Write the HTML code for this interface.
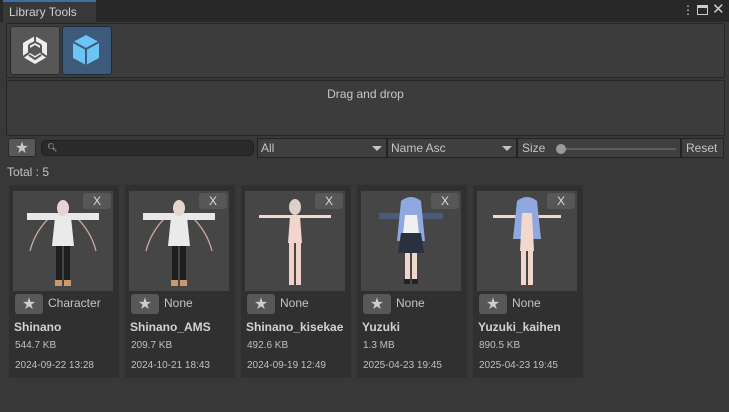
<!DOCTYPE html><html><head><style>
*{margin:0;padding:0;box-sizing:border-box}
body{width:729px;height:412px;background:#383838;font-family:"Liberation Sans","Noto Sans CJK JP",sans-serif;color:#c4c4c4;position:relative;overflow:hidden;font-size:12px}
.a{position:absolute}
.btn{background:#585858;border:1px solid #2a2a2a;border-radius:3px}
.star{color:#c8c8c8;font-size:13px;text-align:center;line-height:18px}
.card{position:absolute;top:185px;width:110px;height:193px;background:#303030;border-radius:2px}
.img{position:absolute;left:4px;top:6px;width:100px;height:100px;background:#464646}
.x{position:absolute;left:74px;top:8px;width:28px;height:16px;background:#575757;border-radius:3px;color:#ddd;text-align:center;line-height:16px;font-size:12px}
.sb{position:absolute;left:6px;top:109px;width:28px;height:20px;background:#585858;border-radius:3px;color:#cfcfcf;text-align:center;line-height:20px;font-size:13px}
.lb{position:absolute;left:39px;top:111px;font-size:12px;color:#c4c4c4}
.nm{position:absolute;left:5px;top:135px;font-size:12px;font-weight:bold;color:#d2d2d2}
.sz{position:absolute;left:6px;top:155px;font-size:10px;color:#c0c0c0}
.dt{position:absolute;left:6px;top:175px;font-size:10px;color:#c0c0c0}
.dd{position:absolute;top:138px;height:20px;background:#3f3f3f;border:1px solid #242424;line-height:19px;padding-left:3px;font-size:12px;color:#c4c4c4}
.tri{position:absolute;right:4px;top:7px;width:0;height:0;border-left:5px solid transparent;border-right:5px solid transparent;border-top:5px solid #c4c4c4}
</style></head><body>
<div class="a" style="left:0;top:0;width:729px;height:22px;background:#282828"></div>
<div class="a" style="left:3px;top:0;width:93px;height:22px;background:#383838;border-top:2px solid #3a6ea5;line-height:20px;padding-left:6px;font-size:12px;color:#d0d0d0">Library Tools</div>
<div class="a" style="left:682px;top:4px;color:#ccc;font-size:12px;line-height:12px">⋮</div>
<div class="a" style="left:697px;top:5px;width:11px;height:10px;border:1px solid #ccc;border-top-width:3px"></div>
<div class="a" style="left:712px;top:1px;color:#ccc;font-size:15px;line-height:18px">✕</div>

<div class="a" style="left:6px;top:23px;width:719px;height:55px;background:#3c3c3c;border:1px solid #262626;border-radius:2px"></div>
<div class="a btn" style="left:10px;top:26px;width:50px;height:49px;background:#575757"></div>
<svg class="a" style="left:21px;top:35px" width="28" height="30" viewBox="0 0 28 30"><path d="M14 1 L26 8 V22 L14 29 L2 22 V8 Z" fill="#eee"/><path d="M14 10 L19 13 V18 L14 21 L9 18 V13 Z" fill="#575757"/><path d="M14 1 V8 M8 10 L14 7 L20 10 M2 22 L8 18 M26 22 L20 18 M8 10 V18 M20 10 V18 M8 20 L14 24 L20 20" stroke="#575757" stroke-width="2" fill="none"/></svg>
<div class="a" style="left:62px;top:26px;width:50px;height:49px;background:#3e5a7a;border:1px solid #1f2c3b;border-radius:3px"></div>
<svg class="a" style="left:71px;top:34px" width="30" height="32" viewBox="0 0 30 32"><path d="M15 1 L28 8 V24 L15 31 L2 24 V8 Z" fill="#6cc4f4"/><path d="M2 8 L15 15 L28 8 M15 15 V31" stroke="#3e5a7a" stroke-width="2" fill="none"/></svg>

<div class="a" style="left:6px;top:80px;width:719px;height:56px;background:#3c3c3c;border:1px solid #262626;border-radius:2px;text-align:center;line-height:26px;color:#c8c8c8">Drag and drop</div>

<div class="a btn star" style="left:8px;top:138px;width:28px;height:19px">★</div>
<div class="a" style="left:41px;top:140px;width:213px;height:16px;background:#2a2a2a;border:1px solid #202020;border-radius:5px;color:#ccc;font-size:8px;line-height:14px;padding-left:5px">🔍︎</div>
<div class="dd" style="left:257px;width:130px">All<div class="tri"></div></div>
<div class="dd" style="left:387px;width:130px">Name Asc<div class="tri"></div></div>
<div class="dd" style="left:517px;width:164px;padding-left:4px">Size
<div class="a" style="left:43px;top:9px;width:115px;height:2px;background:#5f5f5f"></div>
<div class="a" style="left:38px;top:5px;width:10px;height:10px;border-radius:50%;background:#999"></div></div>
<div class="dd" style="left:681px;width:43px;padding-left:4px">Reset</div>

<div class="a" style="left:7px;top:165px;color:#c4c4c4;font-size:12px">Total : 5</div>

<div class="card" style="left:9px"><div class="img"><svg width="100" height="100"><g stroke="#c9a8a0" stroke-width="1.3" fill="none"><path d="M38 25 Q22 40 17 60"/><path d="M62 25 Q78 40 83 60"/></g><rect x="14" y="22" width="72" height="7" fill="#e8e8e8"/><ellipse cx="50" cy="17" rx="6" ry="8" fill="#e6d4d0"/><path d="M42 26 H58 L61 55 H39 Z" fill="#eaeaea"/><rect x="43" y="55" width="6" height="35" fill="#1e1e1e"/><rect x="51" y="55" width="6" height="35" fill="#1e1e1e"/><rect x="42" y="89" width="7" height="6" fill="#c99a70"/><rect x="51" y="89" width="7" height="6" fill="#c99a70"/></svg></div><div class="x">X</div><div class="sb">★</div><div class="lb">Character</div><div class="nm">Shinano</div><div class="sz">544.7 KB</div><div class="dt">2024-09-22 13:28</div></div>

<div class="card" style="left:125px"><div class="img"><svg width="100" height="100"><g stroke="#c9a8a0" stroke-width="1.3" fill="none"><path d="M38 25 Q22 40 17 60"/><path d="M62 25 Q78 40 83 60"/></g><rect x="14" y="22" width="72" height="7" fill="#e8e8e8"/><ellipse cx="50" cy="17" rx="6" ry="8" fill="#e6d4d0"/><path d="M42 26 H58 L61 55 H39 Z" fill="#eaeaea"/><rect x="43" y="55" width="6" height="35" fill="#1e1e1e"/><rect x="51" y="55" width="6" height="35" fill="#1e1e1e"/><rect x="42" y="89" width="7" height="6" fill="#c99a70"/><rect x="51" y="89" width="7" height="6" fill="#c99a70"/></svg></div><div class="x">X</div><div class="sb">★</div><div class="lb">None</div><div class="nm">Shinano_AMS</div><div class="sz">209.7 KB</div><div class="dt">2024-10-21 18:43</div></div>

<div class="card" style="left:241px"><div class="img"><svg width="100" height="100"><rect x="14" y="24" width="72" height="3" fill="#f0d8d0"/><ellipse cx="50" cy="16" rx="6" ry="8" fill="#ddd0cc"/><path d="M45 25 H55 L57 52 H43 Z" fill="#f2d5cc"/><rect x="44" y="52" width="5" height="42" fill="#f0d2c8"/><rect x="51" y="52" width="5" height="42" fill="#f0d2c8"/></svg></div><div class="x">X</div><div class="sb">★</div><div class="lb">None</div><div class="nm">Shinano_kisekae</div><div class="sz">492.6 KB</div><div class="dt">2024-09-19 12:49</div></div>

<div class="card" style="left:357px"><div class="img"><svg width="100" height="100"><rect x="18" y="22" width="64" height="6" fill="#4a5a78"/><path d="M40 10 Q50 2 60 10 L64 50 H36 Z" fill="#8fa8e0"/><path d="M44 24 H56 L60 62 H40 Z" fill="#f0f0f0"/><path d="M40 42 H60 L63 62 H37 Z" fill="#2a3040"/><rect x="44" y="62" width="5" height="26" fill="#f0d6cc"/><rect x="51" y="62" width="5" height="26" fill="#f0d6cc"/><rect x="43" y="88" width="6" height="5" fill="#222"/><rect x="51" y="88" width="6" height="5" fill="#222"/></svg></div><div class="x">X</div><div class="sb">★</div><div class="lb">None</div><div class="nm">Yuzuki</div><div class="sz">1.3 MB</div><div class="dt">2025-04-23 19:45</div></div>

<div class="card" style="left:473px"><div class="img"><svg width="100" height="100"><rect x="16" y="24" width="68" height="3" fill="#f2d6cc"/><path d="M40 10 Q50 2 60 10 L64 48 H36 Z" fill="#8fa8e0"/><path d="M45 22 H55 L57 60 H43 Z" fill="#f2d8cc"/><rect x="44" y="60" width="5" height="34" fill="#f0d6cc"/><rect x="51" y="60" width="5" height="34" fill="#f0d6cc"/></svg></div><div class="x">X</div><div class="sb">★</div><div class="lb">None</div><div class="nm">Yuzuki_kaihen</div><div class="sz">890.5 KB</div><div class="dt">2025-04-23 19:45</div></div>
</body></html>
